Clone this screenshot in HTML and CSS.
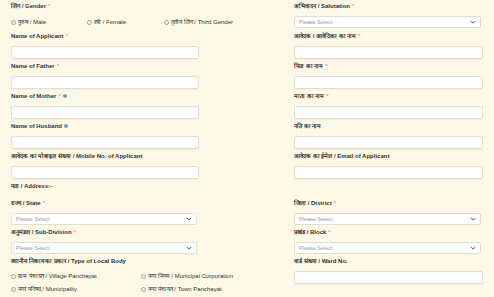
FILE: index.html
```html
<!DOCTYPE html>
<html lang="hi">
<head>
    <meta charset="UTF-8">
    <meta name="viewport" content="width=device-width, initial-scale=1.0">
    <title>Applicant Details</title>
    <link rel="stylesheet" href="styles.css">
</head>
<body>
    <form class="form-grid">
        <div class="field">
            <label class="lbl">लिंग / Gender <span class="req">*</span></label>
            <div class="radio-row gender">
                <label class="radio"><input type="radio" name="gender"> पुरुष / Male</label>
                <label class="radio"><input type="radio" name="gender"> स्त्री / Female</label>
                <label class="radio"><input type="radio" name="gender"> तृतीय लिंग / Third Gender</label>
            </div>
        </div>
        <div class="field">
            <label class="lbl">अभिवादन / Salutation <span class="req">*</span></label>
            <div class="select-wrap">
                <select><option>Please Select</option></select>
                <svg class="chev" viewBox="0 0 8 5" width="6" height="4"><path d="M1 1l3 3 3-3" fill="none" stroke="#555" stroke-width="1.3"/></svg>
            </div>
        </div>

        <div class="field">
            <label class="lbl">Name of Applicant <span class="req">*</span></label>
            <input type="text">
        </div>
        <div class="field">
            <label class="lbl">आवेदक / आवेदिका का नाम <span class="req">*</span></label>
            <input type="text">
        </div>

        <div class="field">
            <label class="lbl">Name of Father <span class="req">*</span></label>
            <input type="text">
        </div>
        <div class="field">
            <label class="lbl">पिता का नाम <span class="req">*</span></label>
            <input type="text">
        </div>

        <div class="field">
            <label class="lbl">Name of Mother <span class="req">*</span> <span class="info"></span></label>
            <input type="text">
        </div>
        <div class="field">
            <label class="lbl">माता का नाम <span class="req">*</span></label>
            <input type="text">
        </div>

        <div class="field">
            <label class="lbl">Name of Husband <span class="info"></span></label>
            <input type="text">
        </div>
        <div class="field">
            <label class="lbl">पति का नाम</label>
            <input type="text">
        </div>

        <div class="field">
            <label class="lbl">आवेदक का मोबाइल संख्या / Mobile No. of Applicant</label>
            <input type="text">
        </div>
        <div class="field">
            <label class="lbl">आवेदक का ईमेल / Email of Applicant</label>
            <input type="text">
        </div>

        <div class="field full">
            <label class="lbl">पता / Address:-</label>
        </div>

        <div class="field">
            <label class="lbl">राज्य / State <span class="req">*</span></label>
            <div class="select-wrap">
                <select><option>Please Select</option></select>
                <svg class="chev" viewBox="0 0 8 5" width="6" height="4"><path d="M1 1l3 3 3-3" fill="none" stroke="#555" stroke-width="1.3"/></svg>
            </div>
        </div>
        <div class="field">
            <label class="lbl">जिला / District <span class="req">*</span></label>
            <div class="select-wrap">
                <select><option>Please Select</option></select>
                <svg class="chev" viewBox="0 0 8 5" width="6" height="4"><path d="M1 1l3 3 3-3" fill="none" stroke="#555" stroke-width="1.3"/></svg>
            </div>
        </div>

        <div class="field">
            <label class="lbl">अनुमंडल / Sub-Division <span class="req">*</span></label>
            <div class="select-wrap">
                <select><option>Please Select</option></select>
                <svg class="chev" viewBox="0 0 8 5" width="6" height="4"><path d="M1 1l3 3 3-3" fill="none" stroke="#555" stroke-width="1.3"/></svg>
            </div>
        </div>
        <div class="field">
            <label class="lbl">प्रखंड / Block <span class="req">*</span></label>
            <div class="select-wrap">
                <select><option>Please Select</option></select>
                <svg class="chev" viewBox="0 0 8 5" width="6" height="4"><path d="M1 1l3 3 3-3" fill="none" stroke="#555" stroke-width="1.3"/></svg>
            </div>
        </div>

        <div class="field">
            <label class="lbl">स्थानीय निकाय का प्रकार / Type of Local Body</label>
            <div class="radio-grid">
                <label class="radio"><input type="radio" name="body"> ग्राम पंचायत / Village Panchayat</label>
                <label class="radio"><input type="radio" name="body"> नगर निगम / Municipal Corporation</label>
                <label class="radio"><input type="radio" name="body"> नगर परिषद / Municipality</label>
                <label class="radio"><input type="radio" name="body"> नगर पंचायत / Town Panchayat</label>
            </div>
        </div>
        <div class="field">
            <label class="lbl">वार्ड संख्या / Ward No.</label>
            <input type="text">
        </div>
    </form>
</body>
</html>
```

FILE: styles.css
```css
body {
    margin: 0;
    background-color: #fef9e6;
    font-family: 'Liberation Sans', Arial, sans-serif;
    color: #333;
}
.form-grid {
    display: grid;
    grid-template-columns: 188px 189px;
    column-gap: 95px;
    padding: 1px 0 0 11px;
    align-items: start;
}
.field {
    display: flex;
    flex-direction: column;
    padding-bottom: 2px;
}
.field.full {
    grid-column: 1 / -1;
}
.lbl {
    font-size: 6px;
    font-weight: bold;
    line-height: 10px;
    height: 10px;
    margin-bottom: 5px;
    white-space: nowrap;
    display: flex;
    align-items: center;
    gap: 2px;
}
.req {
    color: #e57373;
    font-weight: normal;
}
.info {
    display: inline-block;
    width: 4px;
    height: 4px;
    border-radius: 50%;
    background: #6a9ccc;
}
input[type="text"] {
    display: block;
    box-sizing: border-box;
    width: 100%;
    height: 13px;
    margin: 0;
    border: 1px solid #e2ded2;
    border-radius: 2px;
    background: #fff;
    box-shadow: 0 1px 1px rgba(0, 0, 0, 0.04);
}
.select-wrap {
    position: relative;
    margin-right: 2px;
    height: 12px;
}
.select-wrap select {
    display: block;
    box-sizing: border-box;
    width: 100%;
    height: 12px;
    margin: 0;
    padding: 0 0 0 4px;
    border: 1px solid #e2ded2;
    border-radius: 2px;
    background: #fff;
    color: #999;
    font-family: 'Liberation Sans', Arial, sans-serif;
    font-size: 5.5px;
    appearance: none;
    -webkit-appearance: none;
}
.chev {
    position: absolute;
    right: 5px;
    top: 4px;
}
.radio {
    display: flex;
    align-items: center;
    gap: 2px;
    font-size: 6px;
    line-height: 10px;
    color: #333;
    white-space: nowrap;
}
.radio input {
    appearance: none;
    -webkit-appearance: none;
    box-sizing: border-box;
    width: 5px;
    height: 5px;
    margin: 0;
    border: 0.7px solid #999;
    border-radius: 50%;
    background: #fff;
}
.radio-row {
    display: grid;
    grid-template-columns: 76px 77px auto;
    margin: 1px 0 2px;
}
.radio-grid {
    display: grid;
    grid-template-columns: 130px auto;
    row-gap: 3px;
    margin-top: 0;
}
```
